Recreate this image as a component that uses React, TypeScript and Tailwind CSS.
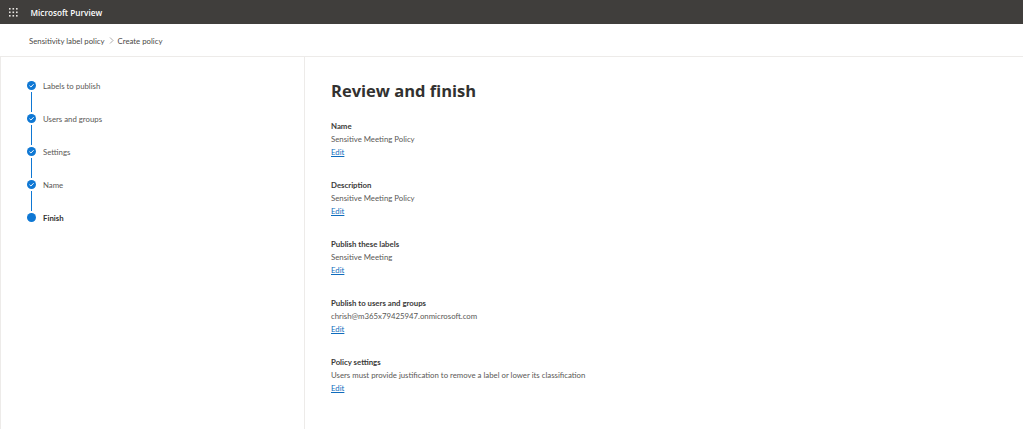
const steps = ['Labels to publish', 'Users and groups', 'Settings', 'Name']

const sections = [
  { title: 'Name', value: 'Sensitive Meeting Policy' },
  { title: 'Description', value: 'Sensitive Meeting Policy' },
  { title: 'Publish these labels', value: 'Sensitive Meeting' },
  { title: 'Publish to users and groups', value: 'chrish@m365x79425947.onmicrosoft.com' },
  { title: 'Policy settings', value: 'Users must provide justification to remove a label or lower its classification' },
]

function Waffle() {
  return (
    <svg width="9" height="9" viewBox="0 0 9 9" fill="#e8e6e3">
      {[0, 3.5, 7].map((y) =>
        [0, 3.5, 7].map((x) => <rect key={`${x}-${y}`} x={x} y={y} width="1.6" height="1.6" />),
      )}
    </svg>
  )
}

function StepDot({ done }: { done: boolean }) {
  return (
    <svg width="9" height="9" viewBox="0 0 9 9" className="shrink-0">
      <circle cx="4.5" cy="4.5" r="4.5" fill="#0f78d4" />
      {done && <path d="M2.5 4.7 L3.9 6 L6.6 3.2" fill="none" stroke="#fff" strokeWidth="1" />}
    </svg>
  )
}

export default function App() {
  return (
    <div className="flex h-[429px] w-[1023px] flex-col overflow-hidden bg-white font-['Lato',sans-serif] text-[7.8px] leading-[13px] text-[#3b3a39]">
      <header className="flex h-6 shrink-0 items-center bg-[#403e3c] pl-[8.5px]">
        <Waffle />
        <span className="ml-[13px] font-['Open_Sans',sans-serif] text-[8.2px] font-semibold text-white">Microsoft Purview</span>
      </header>

      <nav className="flex h-[33px] shrink-0 items-center border-b border-[#edebe9] pl-[29px] text-[#4a4846]">
        <span className="mt-[2px]">Sensitivity label policy</span>
        <svg width="5" height="7" viewBox="0 0 5 7" className="mx-[4px]">
          <path d="M1 0.5 L4 3.5 L1 6.5" fill="none" stroke="#8a8886" strokeWidth="0.7" />
        </svg>
        <span className="mt-[2px]">Create policy</span>
      </nav>

      <div className="flex min-h-0 flex-1">
        <aside className="w-[305px] shrink-0 border-x border-[#edebe9] pl-[26px] pt-6">
          {steps.map((step) => (
            <div key={step}>
              <div className="flex h-[9px] items-center gap-[7px]">
                <StepDot done />
                <span className="mt-[2px] text-[#5a5856]">{step}</span>
              </div>
              <div className="my-[2px] ml-1 h-5 w-px bg-[#0f78d4]" />
            </div>
          ))}
          <div className="flex h-[9px] items-center gap-[7px]">
            <StepDot done={false} />
            <span className="mt-[2px] font-bold text-[#323130]">Finish</span>
          </div>
        </aside>

        <main className="flex-1 pl-[26px] pt-[22px]">
          <h1 className="font-['Open_Sans',sans-serif] text-[16.5px] font-bold leading-6 text-[#323130]">Review and finish</h1>
          <div className="mt-[17px] flex flex-col gap-[20px]">
            {sections.map((s) => (
              <section key={s.title}>
                <h2 className="font-bold text-[#3b3a39]">{s.title}</h2>
                <p className="text-[#5a5856]">{s.value}</p>
                <a className="text-[#0f6cbd] underline">Edit</a>
              </section>
            ))}
          </div>
        </main>
      </div>
    </div>
  )
}
